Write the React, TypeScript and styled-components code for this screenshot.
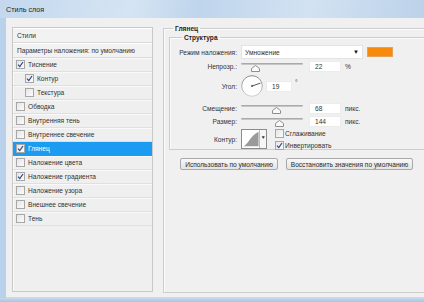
import styled, { createGlobalStyle } from 'styled-components';

const GlobalStyle = createGlobalStyle`
  html, body {
    margin: 0;
    padding: 0;
    overflow: hidden;
  }
  body {
    font-family: "Liberation Sans", Arial, sans-serif;
    font-size: 6.6px;
    color: #333333;
  }
`;

const Window = styled.div`
  width: 440px;
  height: 302px;
  display: flex;
  flex-direction: column;
  background: #b9d1ea;
  overflow: hidden;
`;

const TitleBar = styled.div`
  height: 18px;
  flex-shrink: 0;
  display: flex;
  align-items: center;
  padding-left: 6px;
  font-size: 7.2px;
  color: #1e1e1e;
  background: linear-gradient(100deg, #c3d8ee 0%, #d5e4f3 30%, #bfd5ec 45%, #d2e2f2 70%, #b9d0e9 100%);
`;

const Body = styled.div`
  height: 280px;
  margin-left: 6px;
  display: flex;
  align-items: flex-start;
  gap: 10px;
  padding: 9px 0 0 6px;
  box-sizing: border-box;
  background: #f0f0f0;
  border-bottom: 1px solid #d6d6d6;
`;

const StylesPanel = styled.div`
  width: 141px;
  height: 265px;
  flex-shrink: 0;
  box-sizing: border-box;
  border: 1px solid #c8c8c8;
  box-shadow: inset 1px 1px 0 #fafafa;
  background: #efefef;
`;

const HeaderRow = styled.div`
  height: 15px;
  display: flex;
  align-items: center;
  padding-left: 4px;
  box-sizing: border-box;
  background: #f2f2f2;
  border-bottom: 1px solid #d9d9d9;
  box-shadow: inset 0 1px 0 #ffffff;
`;

const StyleRow = styled.div<{ $active?: boolean; $indent?: boolean }>`
  height: 14px;
  display: flex;
  align-items: center;
  gap: 3px;
  padding-left: ${(p) => (p.$indent ? 12 : 3)}px;
  box-sizing: border-box;
  border-bottom: 1px solid ${(p) => (p.$active ? '#1b9cf2' : '#e0e0e0')};
  box-shadow: inset 0 1px 0 ${(p) => (p.$active ? '#1b9cf2' : '#f9f9f9')};
  background: ${(p) => (p.$active ? '#1b9cf2' : 'transparent')};
  color: ${(p) => (p.$active ? '#ffffff' : '#333333')};
`;

const Box = styled.span<{ $checked?: boolean }>`
  width: 7px;
  height: 7px;
  flex-shrink: 0;
  display: inline-flex;
  align-items: center;
  justify-content: center;
  border: 1px solid #a7a7a7;
  background: linear-gradient(135deg, #e6e6e6, #fbfbfb);
`;

const SettingsArea = styled.div`
  flex: 1;
  margin-top: -3px;
`;

const Group = styled.fieldset<{ $height?: number }>`
  margin: 0;
  padding: 0 0 0 5px;
  border: 1px solid #cdcdcd;
  box-shadow: inset 1px 1px 0 #fbfbfb;
  height: ${(p) => (p.$height ? `${p.$height}px` : 'auto')};
  box-sizing: border-box;
  min-width: 0;
`;

const InnerGroup = styled.fieldset`
  margin: 0;
  padding: 3px 0 0 0;
  border: 1px solid #cdcdcd;
  box-shadow: inset 1px 1px 0 #fbfbfb;
  min-width: 0;
`;

const Legend = styled.legend<{ $offset: number }>`
  margin-left: ${(p) => p.$offset}px;
  padding: 0 2px;
  font-weight: bold;
  font-size: 6.6px;
  line-height: 9px;
  color: #222;
`;

const Row = styled.div<{ $h: number; $mb: number }>`
  height: ${(p) => p.$h}px;
  margin-bottom: ${(p) => p.$mb}px;
  display: flex;
  align-items: center;
`;

const Label = styled.span`
  width: 67px;
  margin-right: 4px;
  text-align: right;
  white-space: nowrap;
  flex-shrink: 0;
  color: #333;
`;

const Select = styled.div`
  width: 122px;
  height: 14px;
  box-sizing: border-box;
  display: flex;
  align-items: center;
  justify-content: space-between;
  padding: 0 3px;
  background: #ffffff;
  border: 1px solid #e4e4e4;
`;

const Arrow = styled.span`
  font-size: 6px;
  color: #111;
`;

const Swatch = styled.div`
  width: 26px;
  height: 10px;
  margin-left: 4px;
  background: #f7890b;
  border: 1px solid #e6a15a;
  box-sizing: border-box;
`;

const SliderWrap = styled.div`
  position: relative;
  width: 62px;
  height: 11px;
  margin-right: 6px;
`;

const Track = styled.div`
  position: absolute;
  left: 0;
  right: 0;
  top: 2px;
  height: 2px;
  border-radius: 1px;
  background: linear-gradient(#9c9c9c, #d4d4d4);
`;

const Thumb = styled.svg`
  position: absolute;
  top: 4px;
`;

const NumInput = styled.div<{ $w: number }>`
  width: ${(p) => p.$w}px;
  height: 11px;
  box-sizing: border-box;
  display: flex;
  align-items: center;
  padding-left: 5px;
  background: #ffffff;
  border: 1px solid #ececec;
  flex-shrink: 0;
`;

const Unit = styled.span`
  margin-left: 4px;
  color: #333;
`;

const Degree = styled.span`
  margin-left: 3px;
  align-self: flex-start;
  margin-top: 4px;
`;

const Dial = styled.svg`
  margin-right: 3px;
  flex-shrink: 0;
`;

const ContourPicker = styled.div`
  width: 26px;
  height: 20px;
  display: flex;
  box-sizing: border-box;
  border: 1px solid #8c8c8c;
  background: #ffffff;
  margin-right: 8px;
`;

const ContourDrop = styled.div`
  width: 6px;
  border-left: 1px solid #bdbdbd;
  display: flex;
  align-items: flex-start;
  justify-content: center;
  padding-top: 4px;
  font-size: 5px;
  background: #f6f6f6;
`;

const CheckList = styled.div`
  display: flex;
  flex-direction: column;
  gap: 3px;
`;

const CheckItem = styled.label`
  display: flex;
  align-items: center;
  gap: 1px;
`;

const ButtonRow = styled.div`
  display: flex;
  gap: 8px;
  margin: 8px 0 0 11px;
`;

const Button = styled.button<{ $w: number }>`
  width: ${(p) => p.$w}px;
  height: 12px;
  padding: 0;
  font-family: "Liberation Sans", Arial, sans-serif;
  font-size: 6.6px;
  color: #2b2b2b;
  border: 1px solid #a9a9a9;
  border-radius: 2px;
  background: linear-gradient(#f8f8f8, #e3e3e3);
`;

const BottomEdge = styled.div`
  height: 4px;
  background: linear-gradient(#c6d9ec, #a9c4df);
`;

function Check({ checked }: { checked?: boolean }) {
  return (
    <Box $checked={checked}>
      {checked && (
        <svg width="7" height="7" viewBox="0 0 7 7">
          <path d="M1 3.6 L2.8 5.6 L6 1" stroke="#2a4a86" strokeWidth="1.2" fill="none" />
        </svg>
      )}
    </Box>
  );
}

function Slider({ pos }: { pos: number }) {
  return (
    <SliderWrap>
      <Track />
      <Thumb width="9" height="7" viewBox="0 0 9 7" style={{ left: pos - 4 }}>
        <path d="M4.5 0.5 L8.5 3.5 L8.5 6.5 L0.5 6.5 L0.5 3.5 Z" fill="#fafafa" stroke="#8f8f8f" strokeWidth="1" />
      </Thumb>
    </SliderWrap>
  );
}

const styleItems = [
  { name: 'Тиснение', checked: true },
  { name: 'Контур', checked: true, indent: true },
  { name: 'Текстура', indent: true },
  { name: 'Обводка' },
  { name: 'Внутренняя тень' },
  { name: 'Внутреннее свечение' },
  { name: 'Глянец', checked: true, active: true },
  { name: 'Наложение цвета' },
  { name: 'Наложение градиента', checked: true },
  { name: 'Наложение узора' },
  { name: 'Внешнее свечение' },
  { name: 'Тень' },
];

export default function App() {
  return (
    <>
      <GlobalStyle />
      <Window>
        <TitleBar>Стиль слоя</TitleBar>
        <Body>
          <StylesPanel>
            <HeaderRow>Стили</HeaderRow>
            <HeaderRow>Параметры наложения: по умолчанию</HeaderRow>
            {styleItems.map((item) => (
              <StyleRow key={item.name} $active={item.active} $indent={item.indent}>
                <Check checked={item.checked} />
                <span>{item.name}</span>
              </StyleRow>
            ))}
          </StylesPanel>
          <SettingsArea>
            <Group $height={269}>
              <Legend $offset={4}>Глянец</Legend>
              <InnerGroup>
                <Legend $offset={12}>Структура</Legend>
                <Row $h={14} $mb={2}>
                  <Label>Режим наложения:</Label>
                  <Select>
                    <span>Умножение</span>
                    <Arrow>▼</Arrow>
                  </Select>
                  <Swatch />
                </Row>
                <Row $h={11} $mb={3}>
                  <Label>Непрозр.:</Label>
                  <Slider pos={14} />
                  <NumInput $w={32}>22</NumInput>
                  <Unit>%</Unit>
                </Row>
                <Row $h={22} $mb={6}>
                  <Label>Угол:</Label>
                  <Dial width="22" height="22" viewBox="0 0 22 22">
                    <defs>
                      <linearGradient id="dialRim" x1="0" y1="0" x2="0" y2="1">
                        <stop offset="0" stopColor="#8a8a8a" />
                        <stop offset="1" stopColor="#d0d0d0" />
                      </linearGradient>
                    </defs>
                    <circle cx="11" cy="11" r="10.3" fill="#fdfdfd" stroke="url(#dialRim)" strokeWidth="1" />
                    <line x1="11" y1="11" x2="19.5" y2="8.1" stroke="#444" strokeWidth="0.9" />
                    <circle cx="11" cy="11" r="0.9" fill="#444" />
                  </Dial>
                  <NumInput $w={26}>19</NumInput>
                  <Degree>°</Degree>
                </Row>
                <Row $h={11} $mb={2}>
                  <Label>Смещение:</Label>
                  <Slider pos={35} />
                  <NumInput $w={32}>68</NumInput>
                  <Unit>пикс.</Unit>
                </Row>
                <Row $h={11} $mb={2}>
                  <Label>Размер:</Label>
                  <Slider pos={38} />
                  <NumInput $w={32}>144</NumInput>
                  <Unit>пикс.</Unit>
                </Row>
                <Row $h={20} $mb={0}>
                  <Label>Контур:</Label>
                  <ContourPicker>
                    <svg width="19" height="18" viewBox="0 0 19 18">
                      <path d="M1 17 C6 16 9 5 18 1 L18 17 Z" fill="#9a9a9a" />
                    </svg>
                    <ContourDrop>▼</ContourDrop>
                  </ContourPicker>
                  <CheckList>
                    <CheckItem>
                      <Check />
                      <span>Сглаживание</span>
                    </CheckItem>
                    <CheckItem>
                      <Check checked />
                      <span>Инвертировать</span>
                    </CheckItem>
                  </CheckList>
                </Row>
              </InnerGroup>
              <ButtonRow>
                <Button $w={98}>Использовать по умолчанию</Button>
                <Button $w={127}>Восстановить значения по умолчанию</Button>
              </ButtonRow>
            </Group>
          </SettingsArea>
        </Body>
        <BottomEdge />
      </Window>
    </>
  );
}
